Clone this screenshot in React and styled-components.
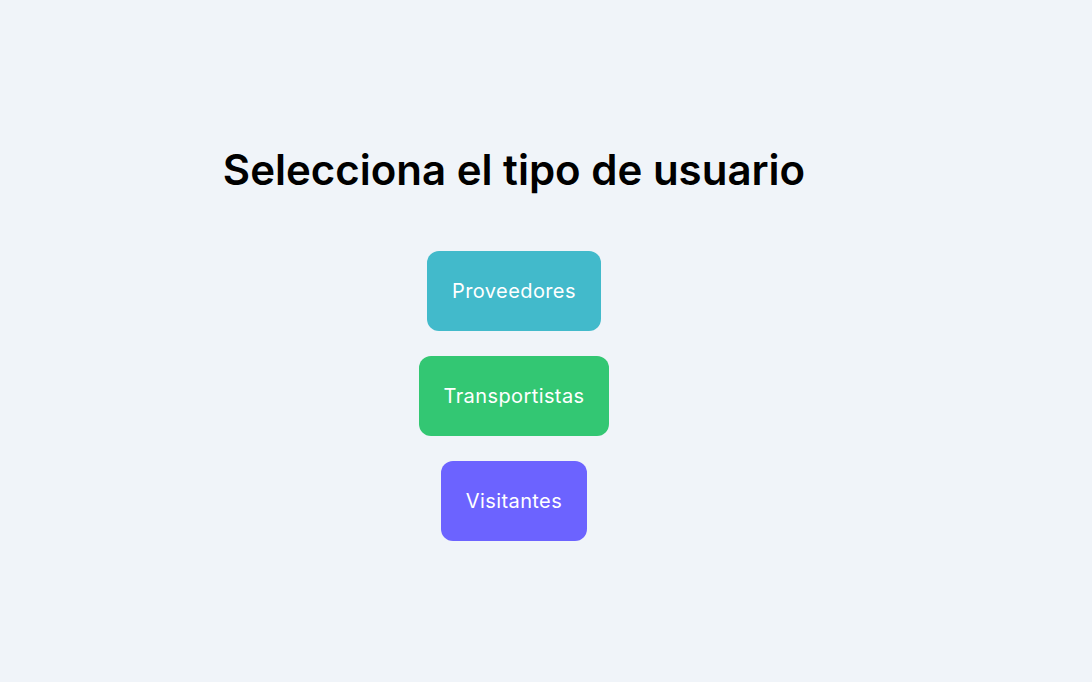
import styled, { createGlobalStyle } from 'styled-components';

const Global = createGlobalStyle`
  html, body {
    margin: 0;
    padding: 0;
    background-color: #f0f4f9;
  }
  * {
    box-sizing: border-box;
  }
`;

const Pagina = styled.div`
  min-height: 100vh;
  width: 100%;
  padding: 136px 64px 40px 0;
  display: flex;
  flex-direction: column;
  align-items: center;
  font-family: 'Inter', 'Liberation Sans', sans-serif;
`;

const Titulo = styled.h1`
  margin: 0 0 47px 0;
  font-size: 42px;
  line-height: 68px;
  font-weight: 600;
  color: #000;
  letter-spacing: 0;
`;

const ListaBotoes = styled.div`
  display: flex;
  flex-direction: column;
  align-items: center;
  gap: 25px;
`;

const Botao = styled.button`
  height: 80px;
  padding: 0 25px;
  border: none;
  border-radius: 12px;
  background-color: ${(p) => p.$cor};
  color: #fff;
  font-family: inherit;
  font-size: 20px;
  letter-spacing: 0.4px;
  font-weight: 400;
  cursor: pointer;
`;

const tipos = [
  { nome: 'Proveedores', cor: '#42bacb' },
  { nome: 'Transportistas', cor: '#33c773' },
  { nome: 'Visitantes', cor: '#6c63ff' },
];

export default function App() {
  return (
    <>
      <Global />
      <Pagina>
        <Titulo>Selecciona el tipo de usuario</Titulo>
        <ListaBotoes>
          {tipos.map((t) => (
            <Botao key={t.nome} $cor={t.cor}>
              {t.nome}
            </Botao>
          ))}
        </ListaBotoes>
      </Pagina>
    </>
  );
}
